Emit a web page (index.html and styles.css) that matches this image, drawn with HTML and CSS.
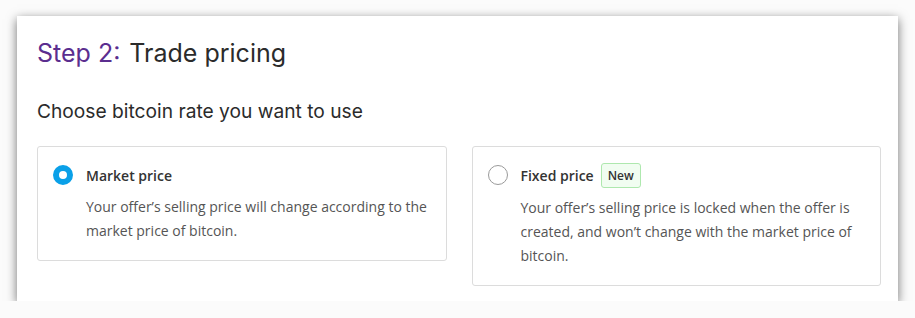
FILE: index.html
```html
<!DOCTYPE html>
<html>
<head>
<meta charset="utf-8">
<link rel="stylesheet" href="styles.css">
</head>
<body>
<div class="stage">
  <section class="panel">
    <h2 class="heading"><span class="step">Step 2:</span><span class="title">Trade pricing</span></h2>
    <p class="subheading">Choose bitcoin rate you want to use</p>
    <div class="options">
      <label class="option">
        <span class="radio radio-checked"></span>
        <span class="option-body">
          <span class="option-title">Market price</span>
          <span class="option-desc">Your offer’s selling price will change according to the market price of bitcoin.</span>
        </span>
      </label>
      <label class="option">
        <span class="radio"></span>
        <span class="option-body">
          <span class="option-title">Fixed price <span class="badge">New</span></span>
          <span class="option-desc">Your offer’s selling price is locked when the offer is created, and won’t change with the market price of bitcoin.</span>
        </span>
      </label>
    </div>
  </section>
</div>
</body>
</html>
```

FILE: styles.css
```css
html, body {
  margin: 0;
  padding: 0;
  background: #fbfbfb;
}
.stage {
  padding: 16px 0 0 17px;
}
.panel {
  box-sizing: border-box;
  width: 881px;
  height: 285px;
  background: #fff;
  box-shadow: 0 3px 10px rgba(0, 0, 0, 0.55);
  padding: 22px 17px 0 20px;
}
.heading {
  margin: 0;
  font-family: Inter, "Noto Sans", sans-serif;
  font-weight: 400;
  font-size: 25px;
  line-height: 30px;
  color: #2b2b2b;
  display: flex;
  gap: 9px;
}
.step {
  color: #5b2e8f;
}
.subheading {
  margin: 31px 0 0 0;
  font-family: Inter, "Noto Sans", sans-serif;
  font-size: 19.2px;
  line-height: 24px;
  color: #2b2b2b;
}
.options {
  margin-top: 23px;
  display: grid;
  grid-template-columns: 1fr 1fr;
  gap: 25px;
  align-items: start;
}
.option {
  display: flex;
  gap: 13px;
  border: 1px solid #dcdcdc;
  border-radius: 3px;
  padding: 16px 16px 17px 15px;
  font-family: "Open Sans", sans-serif;
}
.radio {
  box-sizing: border-box;
  flex: none;
  width: 20px;
  height: 20px;
  margin-top: 2px;
  border-radius: 50%;
  border: 1px solid #9a9a9a;
  background: #fff;
}
.radio-checked {
  border: 6px solid #0aa0e8;
}
.option-body {
  display: flex;
  flex-direction: column;
  gap: 8px;
}
.option-title {
  display: flex;
  align-items: center;
  gap: 7px;
  min-height: 24px;
  font-size: 14px;
  font-weight: 600;
  color: #333;
}
.badge {
  box-sizing: border-box;
  height: 25px;
  padding: 0 6px;
  display: inline-flex;
  align-items: center;
  border: 1px solid #aee8ae;
  background: #f1fdf1;
  border-radius: 3px;
  font-size: 12px;
  font-weight: 600;
  color: #333;
}
.option-desc {
  font-size: 14px;
  line-height: 24px;
  color: #555;
}
```
